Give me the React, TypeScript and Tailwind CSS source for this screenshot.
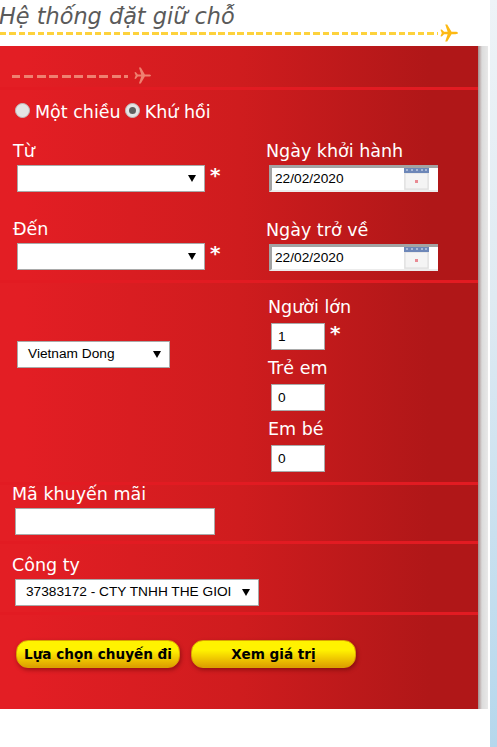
const Plane = ({ className }: { className: string }) => (
  <svg viewBox="0 0 20 20" className={className} fill="currentColor">
    <path d="M0.5 6.5 L2 6 L4.5 8.7 L8.5 8.7 L5.8 0.5 L8 0.5 L12.8 8.7 L17 8.7 C19 8.7 20 9.4 20 10 C20 10.6 19 11.3 17 11.3 L12.8 11.3 L8 19.5 L5.8 19.5 L8.5 11.3 L4.5 11.3 L2 14 L0.5 13.5 L2 10 Z" />
  </svg>
);

const Calendar = () => (
  <svg viewBox="0 0 25 22" className="w-[25px] h-[22px] shrink-0 mr-[9px]">
    <rect x="0" y="0" width="25" height="22" fill="#ececec" />
    <rect x="1" y="5" width="23" height="16" fill="#f4f4f4" stroke="#dcdcdc" />
    <rect x="0" y="0" width="25" height="5" fill="#6d87b8" />
    <path d="M2 1h2v2H2zM7 1h2v2H7zM12 1h2v2h-2zM17 1h2v2h-2zM21 1h2v2h-2z" fill="#a9b9d6" />
    <rect x="11" y="12" width="3" height="3" fill="#e98a93" />
  </svg>
);

const Divider = () => <div className="h-[3px] bg-[#e21b22]" />;

const Label = ({ children, className = "" }: { children: string; className?: string }) => (
  <div className={`text-[17.5px] leading-[20px] text-white whitespace-nowrap ${className}`}>{children}</div>
);

const Star = () => <span className="text-[20px] leading-none font-bold text-white">*</span>;

const FakeSelect = ({ width, text = "" }: { width: string; text?: string }) => (
  <div
    className={`${width} h-[27px] bg-white border border-[#a9a9a9] flex items-center justify-between pl-[10px] pr-[8px] text-[13.7px] text-black whitespace-nowrap font-['Liberation_Sans',sans-serif]`}
  >
    <span>{text}</span>
    <span className="w-0 h-0 border-l-[4px] border-r-[4px] border-t-[7px] border-l-transparent border-r-transparent border-t-black" />
  </div>
);

const DateBox = ({ value }: { value: string }) => (
  <div className="w-[169px] h-[27px] bg-white border-t-[3px] border-l-[3px] border-b-[2px] border-t-[#a3a3a3] border-l-[#a3a3a3] border-b-[#ececec] flex items-start justify-between font-['Liberation_Sans',sans-serif]">
    <span className="pl-[3px] text-[13.7px] leading-[22px] text-black">{value}</span>
    <Calendar />
  </div>
);

const NumberBox = ({ value }: { value: string }) => (
  <div className="w-[54px] h-[27px] bg-white border border-[#a9a9a9] pl-[6px] text-[13.7px] leading-[25px] text-black font-['Liberation_Sans',sans-serif]">
    {value}
  </div>
);

const Radio = ({ checked }: { checked?: boolean }) => (
  <span className="w-[15px] h-[15px] rounded-full border border-[#bdbdbd] bg-[#e4e4e4] flex items-center justify-center shrink-0">
    {checked && <span className="w-[7px] h-[7px] rounded-full bg-[#5f5f5f]" />}
  </span>
);

const YellowButton = ({ children, width }: { children: string; width: string }) => (
  <button
    className={`${width} h-[28px] rounded-[12px] border border-[#d9a400] bg-gradient-to-b from-[#fff200] from-35% to-[#dd9f00] text-[13.6px] font-bold text-black shadow-[1px_2px_4px_rgba(70,0,0,0.45)] whitespace-nowrap`}
  >
    {children}
  </button>
);

export default function App() {
  return (
    <div className="w-[497px] h-[747px] overflow-hidden bg-white flex font-['DejaVu_Sans',sans-serif]">
      <div className="w-[488px] shrink-0 flex flex-col">
        {/* Header */}
        <header className="h-[46px]">
          <h1 className="italic -ml-[1px] text-[22.4px] leading-[32px] text-[#5a5a5a] whitespace-nowrap">
            Hệ thống đặt giữ chỗ
          </h1>
          <div className="flex items-center h-[16px] -mt-[7px] w-[458px]">
            <div className="flex-1 mr-[2px] h-[3px] bg-[repeating-linear-gradient(90deg,#fdd23c_0_6.5px,transparent_6.5px_9.5px)]" />
            <Plane className="w-[18px] h-[18px] text-[#fdb913] shrink-0" />
          </div>
        </header>

        {/* Form panel */}
        <main className="h-[663px] flex">
          <div className="w-[478px] bg-gradient-to-r from-[#e31e24] from-5% via-[#cf1c1e] via-50% to-[#b01718] to-90% flex flex-col">
            <div className="h-[41px] pl-[12px] pt-[21px] flex items-start">
              <div className="w-[116px] mr-[6px] mt-[8px] h-[3px] bg-[repeating-linear-gradient(90deg,#ef8070_0_8.5px,transparent_8.5px_12.5px)]" />
              <Plane className="w-[17px] h-[17px] text-[#ef8070] shrink-0" />
            </div>
            <Divider />

            <div className="h-[190px]">
              <div className="flex items-center pl-[15px] h-[41px] text-[17.5px] text-white">
                <Radio />
                <span className="ml-[5px] mr-[4px] mt-[3px]">Một chiều</span>
                <Radio checked />
                <span className="ml-[5px] mt-[3px]">Khứ hồi</span>
              </div>
              <div className="grid grid-cols-[253px_1fr] pt-[10px]">
                <div className="pl-[13px]">
                  <Label>Từ</Label>
                  <div className="flex ml-[4px] mt-[4px] gap-[5px]">
                    <FakeSelect width="w-[188px]" />
                    <Star />
                  </div>
                  <Label className="mt-[27px]">Đến</Label>
                  <div className="flex ml-[4px] mt-[4px] gap-[5px]">
                    <FakeSelect width="w-[188px]" />
                    <Star />
                  </div>
                </div>
                <div className="pl-[13px]">
                  <Label>Ngày khởi hành</Label>
                  <div className="ml-[3px] mt-[4px]">
                    <DateBox value="22/02/2020" />
                  </div>
                  <Label className="mt-[28px]">Ngày trở về</Label>
                  <div className="ml-[3px] mt-[4px]">
                    <DateBox value="22/02/2020" />
                  </div>
                </div>
              </div>
            </div>
            <Divider />

            <div className="h-[199px] grid grid-cols-[253px_1fr]">
              <div className="pl-[17px] pt-[58px]">
                <FakeSelect width="w-[153px]" text="Vietnam Dong" />
              </div>
              <div className="pl-[15px] pt-[14px]">
                <Label>Người lớn</Label>
                <div className="flex ml-[3px] mt-[6px] gap-[5px]">
                  <NumberBox value="1" />
                  <Star />
                </div>
                <Label className="mt-[8px]">Trẻ em</Label>
                <div className="ml-[3px] mt-[6px]">
                  <NumberBox value="0" />
                </div>
                <Label className="mt-[8px]">Em bé</Label>
                <div className="ml-[3px] mt-[6px]">
                  <NumberBox value="0" />
                </div>
              </div>
            </div>
            <Divider />

            <div className="h-[56px] pl-[12px]">
              <Label className="-mt-[1px]">Mã khuyến mãi</Label>
              <div className="w-[200px] h-[27px] mt-[4px] ml-[3px] bg-white border border-[#a9a9a9]" />
            </div>
            <Divider />

            <div className="h-[68px] pl-[12px] pt-[11px]">
              <Label>Công ty</Label>
              <div className="mt-[4px] ml-[3px]">
                <FakeSelect width="w-[244px]" text="37383172 - CTY TNHH THE GIOI" />
              </div>
            </div>
            <Divider />

            <div className="flex pl-[16px] pt-[25px] gap-[11px]">
              <YellowButton width="w-[164px]">Lựa chọn chuyến đi</YellowButton>
              <YellowButton width="w-[165px]">Xem giá trị</YellowButton>
            </div>
          </div>
          <div className="w-[10px] bg-gradient-to-r from-[#a58c8c] via-[#dcdcdc] via-40% to-[#e8e8e8]" />
        </main>
        <div className="flex-1 bg-white" />
      </div>
      <div className="w-[2px] bg-white" />
      <div className="flex-1 bg-gradient-to-b from-[#eef3f7] via-[#dfeaf2] via-40% to-[#b5d7ec]" />
    </div>
  );
}
